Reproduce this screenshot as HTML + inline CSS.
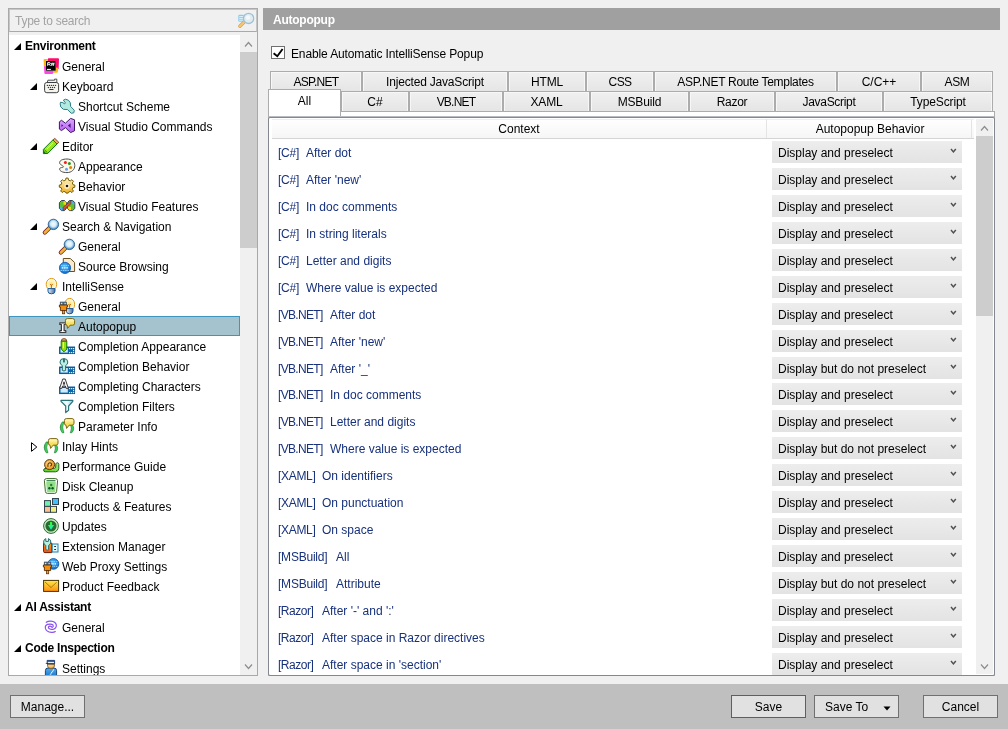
<!DOCTYPE html><html><head><meta charset="utf-8"><title>Options</title><style>
*{margin:0;padding:0;box-sizing:border-box}
html,body{width:1008px;height:729px;overflow:hidden}
body{-webkit-font-smoothing:antialiased;background:#f0f0f0;font-family:"Liberation Sans",sans-serif;font-size:12px;color:#000;position:relative}
.a{position:absolute}
.t{position:absolute;white-space:nowrap;line-height:20px;height:20px;padding-top:1px}
.t.b{padding-top:0;letter-spacing:-0.25px}
.b{font-weight:bold}
svg{position:absolute;overflow:visible}
.tab{position:absolute;height:21px;border:1px solid #acacac;border-bottom:none;background:linear-gradient(#f0f0f0,#e5e5e5);box-shadow:inset 1px 1px 0 #f7f7f7,inset -1px 0 0 #f7f7f7;text-align:center;line-height:21px;white-space:nowrap}
.row{position:absolute;left:278px;white-space:nowrap;color:#17317c;line-height:20px;height:20px;padding-top:1px}
.cmb{position:absolute;left:772px;width:190px;height:22px;background:linear-gradient(#ededed,#e3e3e3);line-height:22px;padding-top:1px;padding-left:6px;white-space:nowrap}
.cmb svg{left:178px;top:7px}
.btn{position:absolute;top:695px;height:23px;border:1px solid #707070;background:#e1e1e1;text-align:center;line-height:23px;white-space:nowrap}
</style></head><body><div id="root" style="position:absolute;left:0;top:0;width:1008px;height:729px;background:#f0f0f0;will-change:transform;overflow:hidden">
<div class="a" style="left:8px;top:8px;width:250px;height:668px;border:1px solid #a9a9a9;background:#f0f0f0"></div>
<div class="a" style="left:9px;top:9px;width:248px;height:23px;border:1px solid #c6c6c6;border-bottom:1px solid #a9a9a9;background:#f0f0f0"></div>
<div class="t" style="left:15px;top:10px;color:#a3a3a3;letter-spacing:-0.25px">Type to search</div>
<svg style="left:236px;top:11px" width="20" height="20" viewBox="0 0 20 20">
<rect x="2.3" y="3.8" width="5.6" height="7" rx="1.2" fill="#8ccbe8"/>
<path d="M3.2 5.6 H7.5 M3.2 7.4 H7.5 M3.2 9.2 H7" stroke="#eaf6fc" stroke-width="0.9"/>
<path d="M3.8 15.2 L8.2 11" stroke="#d9a050" stroke-width="3.4" stroke-linecap="round"/>
<path d="M3.8 15.2 L8.2 11" stroke="#f2c878" stroke-width="2" stroke-linecap="round"/>
<circle cx="12.6" cy="7.4" r="5.1" fill="#e2ecef" stroke="#9cc2da" stroke-width="1.3"/>
<circle cx="12" cy="6.6" r="2.2" fill="#f4f8fa"/>
</svg>
<div class="a" style="left:9px;top:35px;width:231px;height:640px;background:#fff"></div>
<div class="a" style="left:240px;top:52px;width:17px;height:196px;background:#cdcdcd"></div>
<svg style="left:244px;top:40px" width="10" height="8" viewBox="0 0 10 8"><path d="M1 6.5 L4.5 2.5 L8 6.5" fill="none" stroke="#8e8e8e" stroke-width="1.2"/></svg>
<svg style="left:244px;top:663px" width="10" height="8" viewBox="0 0 10 8"><path d="M1 1.5 L4.5 5.5 L8 1.5" fill="none" stroke="#8e8e8e" stroke-width="1.2"/></svg>
<div class="a" style="left:9px;top:316px;width:231px;height:20px;background:#a5c3ce;border:1px solid #3c96be"></div>
<div class="a" style="left:9px;top:35px;width:231px;height:640px;overflow:hidden">
<svg style="left:5px;top:8px" width="8" height="8" viewBox="0 0 8 8"><path d="M7 0 V7 H0Z" fill="#000"/></svg>
<div class="t b" style="left:16px;top:1px">Environment</div>
<svg style="left:34px;top:23px" width="16" height="16" viewBox="0 0 16 16"><path d="M0.6 2 Q0.6 1 1.6 1 L5.6 1 L3 3 L3 8.5 L0.9 8.5 Z" fill="#fdb515"/>
<path d="M5.2 0.3 L15 0.3 Q16 0.3 16 1.3 L15.6 11 L12.7 11.5 L12.7 3 L4.5 3 Z" fill="#ff0a6a"/>
<path d="M9.5 12.7 L12.7 12.7 L12.7 9.5 L15.2 9.8 L14.8 14 Q14.5 14.8 13.5 14.8 L10 14.8 Z" fill="#fdb515"/>
<path d="M0.9 8.2 L3 8.2 L3 12.7 L9.8 12.7 L10.4 15 Q10 16 9 16 L2.2 16 Q1.4 16 1.4 15 Z" fill="#ff45e8"/>
<rect x="3" y="3" width="9.7" height="9.7" fill="#000"/>
<path d="M4.7 7.8 V4.6 H6.4 Q7.3 4.6 7.3 5.5 Q7.3 6.3 6.4 6.3 H5.2 M6.3 6.3 L7.4 7.8" fill="none" stroke="#fff" stroke-width="1"/>
<path d="M8.6 7.8 L9.2 4.5 M10.4 7.8 L11 4.5 M8.2 5.6 H11.4 M8 6.8 H11.2" stroke="#fff" stroke-width="0.8"/>
<rect x="3.9" y="10.9" width="4" height="1" fill="#fff"/></svg>
<div class="t" style="left:53px;top:21px">General</div>
<svg style="left:21px;top:48px" width="8" height="8" viewBox="0 0 8 8"><path d="M7 0 V7 H0Z" fill="#000"/></svg>
<svg style="left:34px;top:43px" width="16" height="16" viewBox="0 0 16 16"><path d="M4.9 2.2 H11.6 L11.6 1.1 H13.8 V4.6 H4.2 Z" fill="#f3f1e8" stroke="#3b3f44" stroke-width="0.9" stroke-linejoin="round"/>
<rect x="1.6" y="4.5" width="14" height="10.2" rx="2.2" fill="#f6f4ea" stroke="#3b3f44" stroke-width="1"/>
<g fill="#1f3a63"><circle cx="4.4" cy="7.4" r="0.7"/><circle cx="6.4" cy="7.4" r="0.7"/><circle cx="8.4" cy="7.4" r="0.7"/><circle cx="10.4" cy="7.4" r="0.7"/><circle cx="12.5" cy="7.4" r="0.7"/>
<circle cx="5.4" cy="9.5" r="0.7"/><circle cx="7.5" cy="9.5" r="0.7"/><circle cx="9.5" cy="9.5" r="0.7"/><circle cx="11.5" cy="9.5" r="0.7"/></g>
<rect x="6.2" y="11" width="4.4" height="1.1" rx="0.5" fill="#1f3a63"/></svg>
<div class="t" style="left:53px;top:41px">Keyboard</div>
<svg style="left:50px;top:63px" width="16" height="16" viewBox="0 0 16 16"><path d="M1.5 4.2 L3.9 4.7 L5.7 5.9 L6.4 4.9 L4.4 2.2 L6.4 1.2 L9.4 2.2 L11.3 4.7 L11.6 8.4 L15.3 12.3 L14.8 14.8 L12.3 15.3 L8.6 11.6 L4.4 11.3 L1.7 8.9 L1.2 5.9 Z" fill="#b2eadf" stroke="#2f7b86" stroke-width="1" stroke-linejoin="round"/></svg>
<div class="t" style="left:69px;top:61px">Shortcut Scheme</div>
<svg style="left:50px;top:83px" width="16" height="16" viewBox="0 0 16 16"><defs><linearGradient id="gvs" x1="0" y1="0" x2="0" y2="1"><stop offset="0" stop-color="#dda8ff"/><stop offset="1" stop-color="#b45cf2"/></linearGradient></defs>
<path d="M0.4 3.8 L2.5 2.3 L6.4 5.2 L11.6 0.4 L15.5 1.8 L15.5 12.8 L11.6 14.6 L6.4 9.7 L2.5 12.6 L0.4 11.1 Z" fill="url(#gvs)" stroke="#3f1660" stroke-width="1" stroke-linejoin="round"/>
<path d="M2.4 6.2 L2.4 8.9 L4.3 7.6 Z M8.9 7.5 L11.6 5.2 L11.6 9.9 Z" fill="#4a1a72"/></svg>
<div class="t" style="left:69px;top:81px">Visual Studio Commands</div>
<svg style="left:21px;top:108px" width="8" height="8" viewBox="0 0 8 8"><path d="M7 0 V7 H0Z" fill="#000"/></svg>
<svg style="left:34px;top:103px" width="16" height="16" viewBox="0 0 16 16"><defs><linearGradient id="gpen" x1="0" y1="0" x2="1" y2="1"><stop offset="0" stop-color="#c8ff40"/><stop offset="1" stop-color="#6fd000"/></linearGradient></defs>
<path d="M0.4 15.6 L0.4 11.4 L9.9 1.9 L14 6 L4.6 15.5 Z" fill="url(#gpen)" stroke="#0a780a" stroke-width="1" stroke-linejoin="round"/>
<path d="M9.9 1.9 L11.8 0.4 L15.8 4.3 L14 6 Z" fill="#e8a868" stroke="#7a3a18" stroke-width="0.9" stroke-linejoin="round"/>
<path d="M1.2 11.6 L4.5 14.8" stroke="#0a780a" stroke-width="0.9"/><path d="M0.6 15.4 L0.6 12.6 L3.3 15.4Z" fill="#0a780a"/>
<path d="M4 11 L10 5" stroke="#e8ffb0" stroke-width="0.8"/></svg>
<div class="t" style="left:53px;top:101px">Editor</div>
<svg style="left:50px;top:123px" width="16" height="16" viewBox="0 0 16 16"><path d="M8 1 C12.5 1 15.8 3.6 15.8 7.6 C15.8 11.6 12.6 14.6 8 14.6 C3.5 14.6 0.6 13 0.6 11 C0.6 9.8 2 9.6 3.5 9.4 C4.8 9.2 4.8 8.6 3.6 7.8 C2.2 6.9 0.6 6.2 0.6 4.6 C0.6 2.4 3.6 1 8 1 Z" fill="#fbf9ea" stroke="#4d4d4d" stroke-width="1"/>
<circle cx="6.4" cy="4.6" r="1.5" fill="#f02020"/><circle cx="10.4" cy="5.6" r="1.5" fill="#14a014"/><circle cx="11.6" cy="9.4" r="1.5" fill="#e08010"/><circle cx="7.5" cy="11.3" r="1.5" fill="#6f9ff0"/></svg>
<div class="t" style="left:69px;top:121px">Appearance</div>
<svg style="left:50px;top:143px" width="16" height="16" viewBox="0 0 16 16"><defs><linearGradient id="ggear" x1="0" y1="0" x2="0" y2="1"><stop offset="0" stop-color="#fff4c8"/><stop offset="1" stop-color="#f0b020"/></linearGradient></defs>
<path d="M6.9 0.5 H9.1 L9.5 2.6 L11.3 3.4 L13 2.2 L14.6 3.8 L13.4 5.5 L14.1 7.3 L16 7.7 V9.9 L14.1 10.3 L13.4 12.1 L14.6 13.8 L13 15.4 L11.3 14.2 L9.5 15 L9.1 16 H6.9 L6.5 15 L4.7 14.2 L3 15.4 L1.4 13.8 L2.6 12.1 L1.9 10.3 L0 9.9 V7.7 L1.9 7.3 L2.6 5.5 L1.4 3.8 L3 2.2 L4.7 3.4 L6.5 2.6 Z" transform="translate(0.3 -0.4) scale(0.97)" fill="url(#ggear)" stroke="#6d5a00" stroke-width="1" stroke-linejoin="round"/>
<circle cx="8" cy="8.2" r="2.6" fill="#fffbe8" opacity="0.8"/><circle cx="8" cy="8" r="1.3" fill="#1a1000"/></svg>
<div class="t" style="left:69px;top:141px">Behavior</div>
<svg style="left:50px;top:163px" width="16" height="16" viewBox="0 0 16 16"><path d="M2.5 2.5 L5.5 2.5 L7.3 4.3 L7.3 10.5 L5.5 12.6 L2.5 12.6 L0.4 10.5 L0.4 4.6 Z" fill="#60c030" stroke="#3a4258" stroke-width="1" stroke-linejoin="round"/>
<path d="M10.4 2.5 L13.5 2.5 L15.8 4.6 L15.8 10.5 L13.5 12.6 L10.4 12.6 L8.6 10.5 L8.6 4.5 Z" fill="#60c030" stroke="#3a4258" stroke-width="1" stroke-linejoin="round"/>
<path d="M4.5 3 L7 3.5 L7 7 L4.5 6.5Z" fill="#ffd800"/><path d="M1 8.5 L4 10 L4 12.2 L2.5 12.2 L1 10.5Z" fill="#50b0f0"/>
<path d="M12.5 3 L15.3 5 L15.3 7 L12.5 5.5Z" fill="#50b0f0"/><path d="M9 8.5 L12 9 L12 12.2 L10.5 12.2 L9 10.5Z" fill="#ffd800"/>
<path d="M4 12.4 L4 9.4 L11.8 2.9 L11.8 6 Z" fill="#f04a20" stroke="#3a4258" stroke-width="0.6"/></svg>
<div class="t" style="left:69px;top:161px">Visual Studio Features</div>
<svg style="left:21px;top:188px" width="8" height="8" viewBox="0 0 8 8"><path d="M7 0 V7 H0Z" fill="#000"/></svg>
<svg style="left:34px;top:183px" width="16" height="16" viewBox="0 0 16 16"><defs><radialGradient id="gsr" cx="0.5" cy="0.45" r="0.5"><stop offset="0" stop-color="#f4fbff"/><stop offset="0.55" stop-color="#d8ecf2"/><stop offset="0.7" stop-color="#9fd0f4"/><stop offset="1" stop-color="#3f8ed6"/></radialGradient></defs>
<path d="M1.8 14.6 L6.9 9.6" stroke="#7a2020" stroke-width="4.2" stroke-linecap="round"/><path d="M1.9 14.5 L7 9.5" stroke="#f2b43a" stroke-width="2.6" stroke-linecap="round"/>
<circle cx="10.4" cy="6.4" r="5.2" fill="url(#gsr)" stroke="#2f5f8a" stroke-width="0.9"/></svg>
<div class="t" style="left:53px;top:181px">Search &amp; Navigation</div>
<svg style="left:50px;top:203px" width="16" height="16" viewBox="0 0 16 16"><defs><radialGradient id="gsr" cx="0.5" cy="0.45" r="0.5"><stop offset="0" stop-color="#f4fbff"/><stop offset="0.55" stop-color="#d8ecf2"/><stop offset="0.7" stop-color="#9fd0f4"/><stop offset="1" stop-color="#3f8ed6"/></radialGradient></defs>
<path d="M1.8 14.6 L6.9 9.6" stroke="#7a2020" stroke-width="4.2" stroke-linecap="round"/><path d="M1.9 14.5 L7 9.5" stroke="#f2b43a" stroke-width="2.6" stroke-linecap="round"/>
<circle cx="10.4" cy="6.4" r="5.2" fill="url(#gsr)" stroke="#2f5f8a" stroke-width="0.9"/></svg>
<div class="t" style="left:69px;top:201px">General</div>
<svg style="left:50px;top:223px" width="16" height="16" viewBox="0 0 16 16"><defs><radialGradient id="ggl" cx="0.45" cy="0.4" r="0.6"><stop offset="0" stop-color="#60c8ff"/><stop offset="1" stop-color="#0a6ad0"/></radialGradient></defs>
<path d="M4.3 0.5 H11.3 L15.6 4.5 V13.5 H4.3 Z" fill="#f8ead0" stroke="#6a5020" stroke-width="1" stroke-linejoin="round"/>
<circle cx="6" cy="9.9" r="5.6" fill="url(#ggl)" stroke="#0a58a8" stroke-width="0.8"/>
<path d="M2 7.4 H10 M1.5 12.5 H10" stroke="#bfe8ff" stroke-width="0.7" stroke-dasharray="1.5 0.8"/><path d="M2.8 9.9 H9.6" stroke="#fff" stroke-width="1.2" stroke-dasharray="1.4 0.9"/></svg>
<div class="t" style="left:69px;top:221px">Source Browsing</div>
<svg style="left:21px;top:248px" width="8" height="8" viewBox="0 0 8 8"><path d="M7 0 V7 H0Z" fill="#000"/></svg>
<svg style="left:34px;top:243px" width="16" height="16" viewBox="0 0 16 16"><defs><radialGradient id="gbl" cx="0.5" cy="0.55" r="0.55"><stop offset="0" stop-color="#ffe060"/><stop offset="0.6" stop-color="#fff4c0"/><stop offset="1" stop-color="#fffdf0"/></radialGradient><linearGradient id="gbb" x1="0" y1="0" x2="1" y2="0"><stop offset="0" stop-color="#e8f4ff"/><stop offset="1" stop-color="#4a6aa0"/></linearGradient></defs>
<path d="M5.2 10.8 C2 9 2.5 0.4 8.5 0.4 C14.5 0.4 14.8 9 11.8 10.8 Z" fill="url(#gbl)" stroke="#e09a18" stroke-width="1"/>
<path d="M7.3 6 L8.4 7.6 L9.6 6 M8.4 7.6 V10" fill="none" stroke="#b05a00" stroke-width="0.9"/>
<path d="M5 10.6 H12 V13.2 Q12 15.8 8.5 15.8 Q5 15.8 5 13.2 Z" fill="url(#gbb)" stroke="#1a5898" stroke-width="1"/></svg>
<div class="t" style="left:53px;top:241px">IntelliSense</div>
<svg style="left:50px;top:263px" width="16" height="16" viewBox="0 0 16 16"><defs><radialGradient id="gbl2" cx="0.5" cy="0.55" r="0.55"><stop offset="0" stop-color="#ffe060"/><stop offset="0.6" stop-color="#fff4c0"/><stop offset="1" stop-color="#fffdf0"/></radialGradient><linearGradient id="gbb2" x1="0" y1="0" x2="1" y2="0"><stop offset="0" stop-color="#e8f4ff"/><stop offset="1" stop-color="#4a6aa0"/></linearGradient></defs>
<path d="M7.6 10.8 C4.6 9 5 0.4 10.8 0.4 C16.4 0.4 16.6 9 14 10.8 Z" fill="url(#gbl2)" stroke="#e09a18" stroke-width="1"/>
<path d="M9.6 6 L10.6 7.6 L11.8 6 M10.6 7.6 V10" fill="none" stroke="#b05a00" stroke-width="0.9"/>
<path d="M7.4 10.6 H14 V13.2 Q14 15.8 10.7 15.8 Q7.4 15.8 7.4 13.2 Z" fill="url(#gbb2)" stroke="#1a5898" stroke-width="1"/><rect x="1.2" y="4" width="6.4" height="3" fill="#4a6a88" stroke="#3a4a5a" stroke-width="0.6"/><rect x="2.2" y="4.8" width="1" height="1.6" fill="#fff"/><rect x="5.6" y="4.8" width="1" height="1.6" fill="#fff"/>
<path d="M0.4 7 H8.6 V9 H7.6 V12.6 H1.4 V9 H0.4 Z" fill="#f09010" stroke="#5a2a00" stroke-width="0.9" stroke-linejoin="round"/>
<rect x="3.4" y="12.6" width="2.3" height="3.2" fill="#f8a020" stroke="#5a2a00" stroke-width="0.7"/></svg>
<div class="t" style="left:69px;top:261px">General</div>
<svg style="left:50px;top:283px" width="16" height="16" viewBox="0 0 16 16"><defs><linearGradient id="gbub1" x1="0" y1="0" x2="0" y2="1"><stop offset="0" stop-color="#fffbd0"/><stop offset="0.5" stop-color="#f6e060"/><stop offset="1" stop-color="#f8e040"/></linearGradient></defs><path d="M0.8 4.8 H6.6 V6.5 H5.1 V12.7 H6.8 V14.5 H0.8 V12.7 H2.4 V6.5 H0.8 Z" fill="#fff" stroke="#3c3c3c" stroke-width="1.2" stroke-linejoin="round"/><path d="M6.4 2.6 Q6.4 0.6 8.4 0.6 H13.6 Q15.6 0.6 15.6 2.6 V5.2 Q15.6 7.2 13.6 7.2 H11.1 L8.6 10.4 L8.0 7.2 Q6.4 7.2 6.4 5.2 Z" fill="url(#gbub1)" stroke="#7a6510" stroke-width="1" stroke-linejoin="round"/></svg>
<div class="t" style="left:69px;top:281px">Autopopup</div>
<svg style="left:50px;top:303px" width="16" height="16" viewBox="0 0 16 16"><rect x="0.6" y="9" width="15" height="6.6" fill="#0a68a8" stroke="#0a4a88" stroke-width="0.9"/><rect x="1.5" y="10" width="7.3" height="4.6" fill="#cfeaff"/>
<g fill="#d8f0ff"><rect x="10" y="10" width="1.2" height="1.2"/><rect x="12" y="10" width="1.2" height="1.2"/><rect x="14" y="10" width="1.2" height="1.2"/><rect x="14" y="12" width="1.2" height="1.2"/><rect x="10" y="14" width="1.2" height="1.2"/><rect x="12" y="14" width="1.2" height="1.2"/><rect x="14" y="14" width="1.2" height="1.2"/></g><path d="M2.2 3.2 Q2.2 0.6 5 0.6 Q7.8 0.6 7.8 3.2 Z" fill="#f0b070" stroke="#7a2a10" stroke-width="0.8"/>
<path d="M2.2 3.2 H7.8 V11 L5 13.8 L2.2 11 Z" fill="#98e010" stroke="#0a780a" stroke-width="1" stroke-linejoin="round"/><rect x="3.9" y="4.2" width="0.9" height="6" fill="#fff"/></svg>
<div class="t" style="left:69px;top:301px">Completion Appearance</div>
<svg style="left:50px;top:323px" width="16" height="16" viewBox="0 0 16 16"><rect x="0.6" y="9" width="15" height="6.6" fill="#0a68a8" stroke="#0a4a88" stroke-width="0.9"/><rect x="1.5" y="10" width="7.3" height="4.6" fill="#cfeaff"/>
<g fill="#d8f0ff"><rect x="10" y="10" width="1.2" height="1.2"/><rect x="12" y="10" width="1.2" height="1.2"/><rect x="14" y="10" width="1.2" height="1.2"/><rect x="14" y="12" width="1.2" height="1.2"/><rect x="10" y="14" width="1.2" height="1.2"/><rect x="12" y="14" width="1.2" height="1.2"/><rect x="14" y="14" width="1.2" height="1.2"/></g><path d="M3.3 12.4 V7.6 Q1 6.6 1 4 Q1 0.6 4.9 0.6 Q8.8 0.6 8.8 4 Q8.8 6.6 6.6 7.6 V12.4 Q5 13.6 3.3 12.4 Z" fill="#b8f0e0" stroke="#2a6a70" stroke-width="1" stroke-linejoin="round"/><rect x="4.1" y="0.8" width="1.7" height="3.6" fill="#2a5a68"/></svg>
<div class="t" style="left:69px;top:321px">Completion Behavior</div>
<svg style="left:50px;top:343px" width="16" height="16" viewBox="0 0 16 16"><rect x="0.6" y="9" width="15" height="6.6" fill="#0a68a8" stroke="#0a4a88" stroke-width="0.9"/><rect x="1.5" y="10" width="7.3" height="4.6" fill="#cfeaff"/>
<g fill="#d8f0ff"><rect x="10" y="10" width="1.2" height="1.2"/><rect x="12" y="10" width="1.2" height="1.2"/><rect x="14" y="10" width="1.2" height="1.2"/><rect x="14" y="12" width="1.2" height="1.2"/><rect x="10" y="14" width="1.2" height="1.2"/><rect x="12" y="14" width="1.2" height="1.2"/><rect x="14" y="14" width="1.2" height="1.2"/></g><path d="M0.6 10.4 L3.8 1 H6.2 L9.4 10.4 H7.2 L6.4 8 H3.6 L2.8 10.4 Z M4.2 6.2 H5.8 L5 3.8 Z" fill="#fff" stroke="#3a3a3a" stroke-width="1" stroke-linejoin="round"/></svg>
<div class="t" style="left:69px;top:341px">Completing Characters</div>
<svg style="left:50px;top:363px" width="16" height="16" viewBox="0 0 16 16"><defs><linearGradient id="gfl" x1="0" y1="0" x2="1" y2="0"><stop offset="0" stop-color="#d8f0ff"/><stop offset="0.5" stop-color="#f4faff"/><stop offset="1" stop-color="#90d0f8"/></linearGradient></defs>
<path d="M2 2.3 H13.8 V3.3 L9.6 8 V12.3 L6.7 14.6 V8 L2 3.3 Z" fill="url(#gfl)" stroke="#2a7478" stroke-width="1.2" stroke-linejoin="round"/></svg>
<div class="t" style="left:69px;top:361px">Completion Filters</div>
<svg style="left:50px;top:383px" width="16" height="16" viewBox="0 0 16 16"><defs><linearGradient id="gbub2" x1="0" y1="0" x2="0" y2="1"><stop offset="0" stop-color="#fffbd0"/><stop offset="0.5" stop-color="#f6e060"/><stop offset="1" stop-color="#f8e040"/></linearGradient></defs><defs><linearGradient id="gpar" x1="0" y1="0" x2="1" y2="0"><stop offset="0" stop-color="#0a8a20"/><stop offset="0.5" stop-color="#50e070"/><stop offset="1" stop-color="#0a9a28"/></linearGradient></defs>
<path d="M3.2 3.9 L4.9 3.9 Q2.6 9.4 4.9 14.8 L3.2 14.8 Q-0.8 9.4 3.2 3.9 Z" fill="url(#gpar)" stroke="#0a6a18" stroke-width="0.5"/>
<path d="M12.8 5.9 L11.3 5.9 Q13.4 10.4 11.3 14.8 L12.8 14.8 Q16.6 10.4 12.8 5.9 Z" fill="url(#gpar)" stroke="#0a6a18" stroke-width="0.5"/><path d="M5.4 2.6 Q5.4 0.6 7.4 0.6 H13 Q15 0.6 15 2.6 V5.2 Q15 7.2 13 7.2 H10.1 L7.6 10.4 L7.0 7.2 Q5.4 7.2 5.4 5.2 Z" fill="url(#gbub2)" stroke="#7a6510" stroke-width="1" stroke-linejoin="round"/></svg>
<div class="t" style="left:69px;top:381px">Parameter Info</div>
<svg style="left:22px;top:407px" width="8" height="10" viewBox="0 0 8 10"><path d="M0.5 0.7 L5.8 5 L0.5 9.3Z" fill="#fff" stroke="#000" stroke-width="1"/></svg>
<svg style="left:34px;top:403px" width="16" height="16" viewBox="0 0 16 16"><defs><linearGradient id="gbub3" x1="0" y1="0" x2="0" y2="1"><stop offset="0" stop-color="#fffbd0"/><stop offset="0.5" stop-color="#f6e060"/><stop offset="1" stop-color="#f8e040"/></linearGradient></defs><defs><linearGradient id="gpar3" x1="0" y1="0" x2="1" y2="0"><stop offset="0" stop-color="#0a8a20"/><stop offset="0.5" stop-color="#50e070"/><stop offset="1" stop-color="#0a9a28"/></linearGradient></defs>
<path d="M3.2 3.9 L4.9 3.9 Q2.6 9.4 4.9 14.8 L3.2 14.8 Q-0.8 9.4 3.2 3.9 Z" fill="url(#gpar3)" stroke="#0a6a18" stroke-width="0.5"/>
<path d="M12.8 5.9 L11.3 5.9 Q13.4 10.4 11.3 14.8 L12.8 14.8 Q16.6 10.4 12.8 5.9 Z" fill="url(#gpar3)" stroke="#0a6a18" stroke-width="0.5"/><path d="M5.4 2.6 Q5.4 0.6 7.4 0.6 H13 Q15 0.6 15 2.6 V5.2 Q15 7.2 13 7.2 H10.1 L7.6 10.4 L7.0 7.2 Q5.4 7.2 5.4 5.2 Z" fill="url(#gbub3)" stroke="#7a6510" stroke-width="1" stroke-linejoin="round"/></svg>
<div class="t" style="left:53px;top:401px">Inlay Hints</div>
<svg style="left:34px;top:423px" width="16" height="16" viewBox="0 0 16 16"><defs><radialGradient id="gsn" cx="0.4" cy="0.4" r="0.6"><stop offset="0" stop-color="#ffe090"/><stop offset="1" stop-color="#f09010"/></radialGradient><linearGradient id="gsb" x1="0" y1="1" x2="1" y2="0"><stop offset="0" stop-color="#50d020"/><stop offset="1" stop-color="#a8f080"/></linearGradient></defs>
<path d="M0.6 12 Q0.6 10.4 3 10.4 H11.2 Q12.6 10.4 12.8 8 V5.8 Q13.4 4.6 14.6 4.8 Q15.8 5 15.8 6.4 V10.6 Q15.6 13.6 12.6 13.8 H2.2 Q0.6 13.8 0.6 12 Z" fill="url(#gsb)" stroke="#1a4a10" stroke-width="0.9"/>
<circle cx="6.6" cy="6.6" r="5" fill="url(#gsn)" stroke="#5a3a10" stroke-width="1"/>
<path d="M5 8.8 Q4.4 5.2 6.8 4.8 Q8.8 4.8 8.6 6.8 Q8.4 8 7.2 7.8" fill="none" stroke="#5a3a10" stroke-width="1.1"/></svg>
<div class="t" style="left:53px;top:421px">Performance Guide</div>
<svg style="left:34px;top:443px" width="16" height="16" viewBox="0 0 16 16"><path d="M1.4 2.6 Q1.4 0.6 3.6 0.6 H12.2 Q14.6 0.6 14.6 2.6 L13.6 13.6 Q13.4 15.4 11.6 15.4 H4.4 Q2.6 15.4 2.4 13.6 Z" fill="#fff" stroke="#3f6a28" stroke-width="1"/>
<rect x="3.4" y="2.2" width="9.2" height="1" rx="0.5" fill="#0a5a20"/>
<path d="M3.2 3.9 H12.8 L12.2 14.2 H3.8 Z" fill="#92df88"/>
<circle cx="8.2" cy="7" r="1.2" fill="#2a7a3a"/><circle cx="6.4" cy="10.2" r="1.2" fill="#0a5a20"/><circle cx="9.6" cy="10.2" r="1.2" fill="#0a5a20"/></svg>
<div class="t" style="left:53px;top:441px">Disk Cleanup</div>
<svg style="left:34px;top:463px" width="16" height="16" viewBox="0 0 16 16"><g stroke="#34454e" stroke-width="1">
<rect x="1.5" y="2.6" width="6" height="5.8" fill="#70f0b0"/><rect x="1.5" y="8.4" width="6" height="5.9" fill="#ffc090"/><rect x="7.5" y="8.4" width="6" height="5.9" fill="#f2ee80"/><rect x="9.5" y="0.5" width="6" height="6" fill="#40c0ff"/></g></svg>
<div class="t" style="left:53px;top:461px">Products &amp; Features</div>
<svg style="left:34px;top:483px" width="16" height="16" viewBox="0 0 16 16"><defs><linearGradient id="gup" x1="0" y1="0" x2="0" y2="1"><stop offset="0" stop-color="#30ff20"/><stop offset="1" stop-color="#10f0d0"/></linearGradient></defs>
<circle cx="8" cy="8" r="7.4" fill="#c8ecc8" stroke="#2a6a30" stroke-width="1"/><circle cx="8" cy="8" r="5.6" fill="#2a6a30"/>
<path d="M6.9 3.9 H9.1 V7.1 H11.1 L8 11.8 L4.9 7.1 H6.9 Z" fill="url(#gup)"/></svg>
<div class="t" style="left:53px;top:481px">Updates</div>
<svg style="left:34px;top:503px" width="16" height="16" viewBox="0 0 16 16"><defs><linearGradient id="gex" x1="0" y1="0" x2="0" y2="1"><stop offset="0" stop-color="#ffa010"/><stop offset="1" stop-color="#ff4a10"/></linearGradient></defs>
<path d="M0.6 5.2 H8.8 V14.6 H1.8 Q0.6 14.6 0.6 13.4 Z" fill="url(#gex)" stroke="#6a1a00" stroke-width="1"/>
<rect x="9.2" y="6" width="5.8" height="8" fill="#e0f8ff" stroke="#1a80a8" stroke-width="1"/><rect x="11.2" y="8" width="1.8" height="0.9" fill="#111"/><rect x="11.2" y="11" width="1.8" height="0.9" fill="#111"/>
<path d="M2.8 11.6 V7.4 Q0.6 6.4 0.6 4 Q0.6 1.4 2.8 0.6 V3.4 H5.4 V0.6 Q7.8 1.4 7.8 4 Q7.8 6.4 5.6 7.4 V11.6 Q4.2 12.8 2.8 11.6 Z" fill="#b8f0e0" stroke="#2a6a70" stroke-width="1" stroke-linejoin="round"/></svg>
<div class="t" style="left:53px;top:501px">Extension Manager</div>
<svg style="left:34px;top:523px" width="16" height="16" viewBox="0 0 16 16"><defs><radialGradient id="ggl2" cx="0.45" cy="0.4" r="0.6"><stop offset="0" stop-color="#60c8ff"/><stop offset="1" stop-color="#0a6ad0"/></radialGradient></defs>
<circle cx="10.4" cy="5.9" r="5.4" fill="url(#ggl2)" stroke="#0a58a8" stroke-width="0.8"/>
<path d="M6 3.6 H14.8 M6 8.4 H14.8" stroke="#bfe8ff" stroke-width="0.7" stroke-dasharray="1.5 0.8"/><path d="M7 5.9 H14.2" stroke="#fff" stroke-width="1.2" stroke-dasharray="1.4 0.9"/><rect x="1.2" y="4" width="6.4" height="3" fill="#4a6a88" stroke="#3a4a5a" stroke-width="0.6"/><rect x="2.2" y="4.8" width="1" height="1.6" fill="#fff"/><rect x="5.6" y="4.8" width="1" height="1.6" fill="#fff"/>
<path d="M0.4 7 H8.6 V9 H7.6 V12.6 H1.4 V9 H0.4 Z" fill="#f09010" stroke="#5a2a00" stroke-width="0.9" stroke-linejoin="round"/>
<rect x="3.4" y="12.6" width="2.3" height="3.2" fill="#f8a020" stroke="#5a2a00" stroke-width="0.7"/></svg>
<div class="t" style="left:53px;top:521px">Web Proxy Settings</div>
<svg style="left:34px;top:543px" width="16" height="16" viewBox="0 0 16 16"><defs><linearGradient id="gfb" x1="0" y1="0" x2="0" y2="1"><stop offset="0" stop-color="#ffe848"/><stop offset="1" stop-color="#ff9010"/></linearGradient></defs>
<rect x="0.6" y="2.4" width="15" height="11" fill="url(#gfb)" stroke="#4a3400" stroke-width="1"/>
<path d="M2.4 4.3 L8 9.5 L13.7 4.3" fill="none" stroke="#5a5000" stroke-width="1" stroke-dasharray="0.9 0.5"/></svg>
<div class="t" style="left:53px;top:541px">Product Feedback</div>
<svg style="left:5px;top:569px" width="8" height="8" viewBox="0 0 8 8"><path d="M7 0 V7 H0Z" fill="#000"/></svg>
<div class="t b" style="left:16px;top:562px">AI Assistant</div>
<svg style="left:34px;top:584px" width="16" height="16" viewBox="0 0 16 16"><g fill="none" stroke="#8a50f0" stroke-width="1.2" stroke-linecap="round">
<path d="M3.3 3.3 Q5 2 8 2.2 Q12.5 2.5 13.3 5.9 Q13.6 9.2 10.6 10.1 Q7 10.8 5.6 9.2 Q4.8 7.6 6.9 7.2 Q8.6 7.1 8.8 8.2"/>
<path d="M12.3 12.6 Q11 13.6 8.4 13.4 Q3.4 13 2.4 9.4 Q1.8 6.2 4.6 5.4 Q8.4 4.6 10 6 Q10.8 7.6 9.4 8.3"/></g></svg>
<div class="t" style="left:53px;top:582px">General</div>
<svg style="left:5px;top:610px" width="8" height="8" viewBox="0 0 8 8"><path d="M7 0 V7 H0Z" fill="#000"/></svg>
<div class="t b" style="left:16px;top:603px">Code Inspection</div>
<svg style="left:34px;top:625px" width="16" height="16" viewBox="0 0 16 16"><defs><linearGradient id="gpb" x1="0" y1="0" x2="0" y2="1"><stop offset="0" stop-color="#5aaae8"/><stop offset="1" stop-color="#1a7ad0"/></linearGradient><linearGradient id="gpf" x1="0" y1="0" x2="1" y2="1"><stop offset="0" stop-color="#ffe0a0"/><stop offset="1" stop-color="#f0b040"/></linearGradient></defs>
<path d="M2.4 16 V10.6 Q2.4 8 5 8 H11 Q13.6 8 13.6 10.6 V16 Z" fill="url(#gpb)" stroke="#0a3a70" stroke-width="0.9"/>
<path d="M6.6 15.8 L11 9.2" stroke="#f0f8ff" stroke-width="1.1" stroke-dasharray="1.2 0.4"/>
<path d="M4.6 4 H11.4 V6 Q11.4 8.4 8 8.4 Q4.6 8.4 4.6 6 Z" fill="url(#gpf)" stroke="#7a4a10" stroke-width="0.8"/>
<path d="M4.2 0.4 H11.6 V3.9 H4.2 Z" fill="#2a70c0" stroke="#0a2a60" stroke-width="0.8"/><rect x="4.8" y="2.1" width="6.2" height="0.9" fill="#fff"/><path d="M2.8 3.4 H5" stroke="#0a2a60" stroke-width="0.8"/></svg>
<div class="t" style="left:53px;top:623px">Settings</div>
</div>
<div class="a" style="left:263px;top:8px;width:737px;height:22px;background:#a0a0a0"></div>
<div class="t b" style="left:273px;top:10px;color:#fff">Autopopup</div>
<div class="a" style="left:271px;top:46px;width:14px;height:13px;border:1px solid #6f6f6f;background:#fff"></div>
<svg style="left:271px;top:46px" width="14" height="13" viewBox="0 0 14 13"><path d="M2.6 7.2 L6.3 10.2 L11.6 3" fill="none" stroke="#000" stroke-width="1.9"/></svg>
<div class="t" style="left:291px;top:43px;letter-spacing:-0.13px">Enable Automatic IntelliSense Popup</div>
<div class="tab" style="left:270px;top:71px;width:92px;letter-spacing:-0.68px">ASP.NET</div>
<div class="tab" style="left:362px;top:71px;width:146px;letter-spacing:-0.19px">Injected JavaScript</div>
<div class="tab" style="left:508px;top:71px;width:78px;letter-spacing:-0.22px">HTML</div>
<div class="tab" style="left:586px;top:71px;width:68px;letter-spacing:-0.6px">CSS</div>
<div class="tab" style="left:654px;top:71px;width:183px;letter-spacing:-0.28px">ASP.NET Route Templates</div>
<div class="tab" style="left:837px;top:71px;width:84px;letter-spacing:0px">C/C++</div>
<div class="tab" style="left:921px;top:71px;width:72px;letter-spacing:-0.4px">ASM</div>
<div class="a" style="left:268px;top:111px;width:727px;height:565px;border:1px solid #acacac;background:#fff"></div>
<div class="tab" style="left:341px;top:91px;width:68px;height:20px;letter-spacing:0px">C#</div>
<div class="tab" style="left:409px;top:91px;width:94px;height:20px;letter-spacing:-0.77px">VB.NET</div>
<div class="tab" style="left:503px;top:91px;width:87px;height:20px;letter-spacing:-0.14px">XAML</div>
<div class="tab" style="left:590px;top:91px;width:99px;height:20px;letter-spacing:-0.14px">MSBuild</div>
<div class="tab" style="left:689px;top:91px;width:86px;height:20px;letter-spacing:-0.28px">Razor</div>
<div class="tab" style="left:775px;top:91px;width:108px;height:20px;letter-spacing:-0.3px">JavaScript</div>
<div class="tab" style="left:883px;top:91px;width:110px;height:20px;letter-spacing:-0.14px">TypeScript</div>
<div class="a" style="left:268px;top:89px;width:73px;height:28px;border:1px solid #acacac;border-bottom:none;background:#fff;text-align:center;line-height:22px">All</div>
<div class="a" style="left:268px;top:117px;width:727px;height:559px;border:1px solid #828790;border-radius:2px;background:#fff;overflow:hidden">
</div>
<div class="a" style="left:269px;top:116px;width:725px;height:1px;background:#b8bcc2"></div>
<div class="a" style="left:272px;top:119px;width:702px;height:20px;background:linear-gradient(#fff,#f5f6f7);border-top:1px solid #eeeeee;border-bottom:1px solid #d5d5d5"></div>
<div class="a" style="left:766px;top:119px;width:1px;height:19px;background:#e3e4e5"></div>
<div class="a" style="left:971px;top:120px;width:1px;height:18px;background:#e3e4e5"></div>
<div class="a" style="left:272px;top:119px;width:494px;height:19px;text-align:center;line-height:21px">Context</div>
<div class="a" style="left:767px;top:119px;width:206px;height:19px;text-align:center;line-height:21px">Autopopup Behavior</div>
<div class="a" style="left:976px;top:119px;width:17px;height:555px;background:#f0f0f0"></div>
<div class="a" style="left:976px;top:136px;width:17px;height:180px;background:#cdcdcd"></div>
<svg style="left:980px;top:124px" width="10" height="8" viewBox="0 0 10 8"><path d="M1 6.5 L4.5 2.5 L8 6.5" fill="none" stroke="#8e8e8e" stroke-width="1.2"/></svg>
<svg style="left:980px;top:663px" width="10" height="8" viewBox="0 0 10 8"><path d="M1 1.5 L4.5 5.5 L8 1.5" fill="none" stroke="#8e8e8e" stroke-width="1.2"/></svg>
<div class="a" style="left:269px;top:139px;width:707px;height:536px;overflow:hidden">
<div class="row" style="left:9px;top:3px"><span style="display:inline-block;width:28px;letter-spacing:-0.25px">[C#]</span>After dot</div>
<div class="cmb" style="left:503px;top:2px">Display and preselect<svg width="8" height="6" viewBox="0 0 8 6"><path d="M1 1 L3.4 3.9 L5.8 1" fill="none" stroke="#505050" stroke-width="1.5"/></svg></div>
<div class="row" style="left:9px;top:30px"><span style="display:inline-block;width:28px;letter-spacing:-0.25px">[C#]</span>After &#x27;new&#x27;</div>
<div class="cmb" style="left:503px;top:29px">Display and preselect<svg width="8" height="6" viewBox="0 0 8 6"><path d="M1 1 L3.4 3.9 L5.8 1" fill="none" stroke="#505050" stroke-width="1.5"/></svg></div>
<div class="row" style="left:9px;top:57px"><span style="display:inline-block;width:28px;letter-spacing:-0.25px">[C#]</span>In doc comments</div>
<div class="cmb" style="left:503px;top:56px">Display and preselect<svg width="8" height="6" viewBox="0 0 8 6"><path d="M1 1 L3.4 3.9 L5.8 1" fill="none" stroke="#505050" stroke-width="1.5"/></svg></div>
<div class="row" style="left:9px;top:84px"><span style="display:inline-block;width:28px;letter-spacing:-0.25px">[C#]</span>In string literals</div>
<div class="cmb" style="left:503px;top:83px">Display and preselect<svg width="8" height="6" viewBox="0 0 8 6"><path d="M1 1 L3.4 3.9 L5.8 1" fill="none" stroke="#505050" stroke-width="1.5"/></svg></div>
<div class="row" style="left:9px;top:111px"><span style="display:inline-block;width:28px;letter-spacing:-0.25px">[C#]</span>Letter and digits</div>
<div class="cmb" style="left:503px;top:110px">Display and preselect<svg width="8" height="6" viewBox="0 0 8 6"><path d="M1 1 L3.4 3.9 L5.8 1" fill="none" stroke="#505050" stroke-width="1.5"/></svg></div>
<div class="row" style="left:9px;top:138px"><span style="display:inline-block;width:28px;letter-spacing:-0.25px">[C#]</span>Where value is expected</div>
<div class="cmb" style="left:503px;top:137px">Display and preselect<svg width="8" height="6" viewBox="0 0 8 6"><path d="M1 1 L3.4 3.9 L5.8 1" fill="none" stroke="#505050" stroke-width="1.5"/></svg></div>
<div class="row" style="left:9px;top:165px"><span style="display:inline-block;width:52px;letter-spacing:-0.67px">[VB.NET]</span>After dot</div>
<div class="cmb" style="left:503px;top:164px">Display and preselect<svg width="8" height="6" viewBox="0 0 8 6"><path d="M1 1 L3.4 3.9 L5.8 1" fill="none" stroke="#505050" stroke-width="1.5"/></svg></div>
<div class="row" style="left:9px;top:192px"><span style="display:inline-block;width:52px;letter-spacing:-0.67px">[VB.NET]</span>After &#x27;new&#x27;</div>
<div class="cmb" style="left:503px;top:191px">Display and preselect<svg width="8" height="6" viewBox="0 0 8 6"><path d="M1 1 L3.4 3.9 L5.8 1" fill="none" stroke="#505050" stroke-width="1.5"/></svg></div>
<div class="row" style="left:9px;top:219px"><span style="display:inline-block;width:52px;letter-spacing:-0.67px">[VB.NET]</span>After &#x27;_&#x27;</div>
<div class="cmb" style="left:503px;top:218px">Display but do not preselect<svg width="8" height="6" viewBox="0 0 8 6"><path d="M1 1 L3.4 3.9 L5.8 1" fill="none" stroke="#505050" stroke-width="1.5"/></svg></div>
<div class="row" style="left:9px;top:245px"><span style="display:inline-block;width:52px;letter-spacing:-0.67px">[VB.NET]</span>In doc comments</div>
<div class="cmb" style="left:503px;top:244px">Display and preselect<svg width="8" height="6" viewBox="0 0 8 6"><path d="M1 1 L3.4 3.9 L5.8 1" fill="none" stroke="#505050" stroke-width="1.5"/></svg></div>
<div class="row" style="left:9px;top:272px"><span style="display:inline-block;width:52px;letter-spacing:-0.67px">[VB.NET]</span>Letter and digits</div>
<div class="cmb" style="left:503px;top:271px">Display and preselect<svg width="8" height="6" viewBox="0 0 8 6"><path d="M1 1 L3.4 3.9 L5.8 1" fill="none" stroke="#505050" stroke-width="1.5"/></svg></div>
<div class="row" style="left:9px;top:299px"><span style="display:inline-block;width:52px;letter-spacing:-0.67px">[VB.NET]</span>Where value is expected</div>
<div class="cmb" style="left:503px;top:298px">Display but do not preselect<svg width="8" height="6" viewBox="0 0 8 6"><path d="M1 1 L3.4 3.9 L5.8 1" fill="none" stroke="#505050" stroke-width="1.5"/></svg></div>
<div class="row" style="left:9px;top:326px"><span style="display:inline-block;width:44px;letter-spacing:-0.32px">[XAML]</span>On identifiers</div>
<div class="cmb" style="left:503px;top:325px">Display and preselect<svg width="8" height="6" viewBox="0 0 8 6"><path d="M1 1 L3.4 3.9 L5.8 1" fill="none" stroke="#505050" stroke-width="1.5"/></svg></div>
<div class="row" style="left:9px;top:353px"><span style="display:inline-block;width:44px;letter-spacing:-0.32px">[XAML]</span>On punctuation</div>
<div class="cmb" style="left:503px;top:352px">Display and preselect<svg width="8" height="6" viewBox="0 0 8 6"><path d="M1 1 L3.4 3.9 L5.8 1" fill="none" stroke="#505050" stroke-width="1.5"/></svg></div>
<div class="row" style="left:9px;top:380px"><span style="display:inline-block;width:44px;letter-spacing:-0.32px">[XAML]</span>On space</div>
<div class="cmb" style="left:503px;top:379px">Display and preselect<svg width="8" height="6" viewBox="0 0 8 6"><path d="M1 1 L3.4 3.9 L5.8 1" fill="none" stroke="#505050" stroke-width="1.5"/></svg></div>
<div class="row" style="left:9px;top:407px"><span style="display:inline-block;width:58px;letter-spacing:-0.22px">[MSBuild]</span>All</div>
<div class="cmb" style="left:503px;top:406px">Display and preselect<svg width="8" height="6" viewBox="0 0 8 6"><path d="M1 1 L3.4 3.9 L5.8 1" fill="none" stroke="#505050" stroke-width="1.5"/></svg></div>
<div class="row" style="left:9px;top:434px"><span style="display:inline-block;width:58px;letter-spacing:-0.22px">[MSBuild]</span>Attribute</div>
<div class="cmb" style="left:503px;top:433px">Display but do not preselect<svg width="8" height="6" viewBox="0 0 8 6"><path d="M1 1 L3.4 3.9 L5.8 1" fill="none" stroke="#505050" stroke-width="1.5"/></svg></div>
<div class="row" style="left:9px;top:461px"><span style="display:inline-block;width:44px;letter-spacing:-0.49px">[Razor]</span>After &#x27;-&#x27; and &#x27;:&#x27;</div>
<div class="cmb" style="left:503px;top:460px">Display and preselect<svg width="8" height="6" viewBox="0 0 8 6"><path d="M1 1 L3.4 3.9 L5.8 1" fill="none" stroke="#505050" stroke-width="1.5"/></svg></div>
<div class="row" style="left:9px;top:488px"><span style="display:inline-block;width:44px;letter-spacing:-0.49px">[Razor]</span>After space in Razor directives</div>
<div class="cmb" style="left:503px;top:487px">Display and preselect<svg width="8" height="6" viewBox="0 0 8 6"><path d="M1 1 L3.4 3.9 L5.8 1" fill="none" stroke="#505050" stroke-width="1.5"/></svg></div>
<div class="row" style="left:9px;top:515px"><span style="display:inline-block;width:44px;letter-spacing:-0.49px">[Razor]</span>After space in &#x27;section&#x27;</div>
<div class="cmb" style="left:503px;top:514px">Display and preselect<svg width="8" height="6" viewBox="0 0 8 6"><path d="M1 1 L3.4 3.9 L5.8 1" fill="none" stroke="#505050" stroke-width="1.5"/></svg></div>
</div>
<div class="a" style="left:0;top:684px;width:1008px;height:45px;background:#bfbfbf"></div>
<div class="btn" style="left:10px;width:75px">Manage...</div>
<div class="btn" style="left:731px;width:75px;border-color:#0078d7">Save</div>
<div class="btn" style="left:814px;width:85px;text-align:left;padding-left:10px">Save To</div>
<svg style="left:883px;top:706px" width="8" height="5" viewBox="0 0 8 5"><path d="M0.5 0.5 H7.5 L4 4.5Z" fill="#000"/></svg>
<div class="btn" style="left:923px;width:75px">Cancel</div>
</div></body></html>
